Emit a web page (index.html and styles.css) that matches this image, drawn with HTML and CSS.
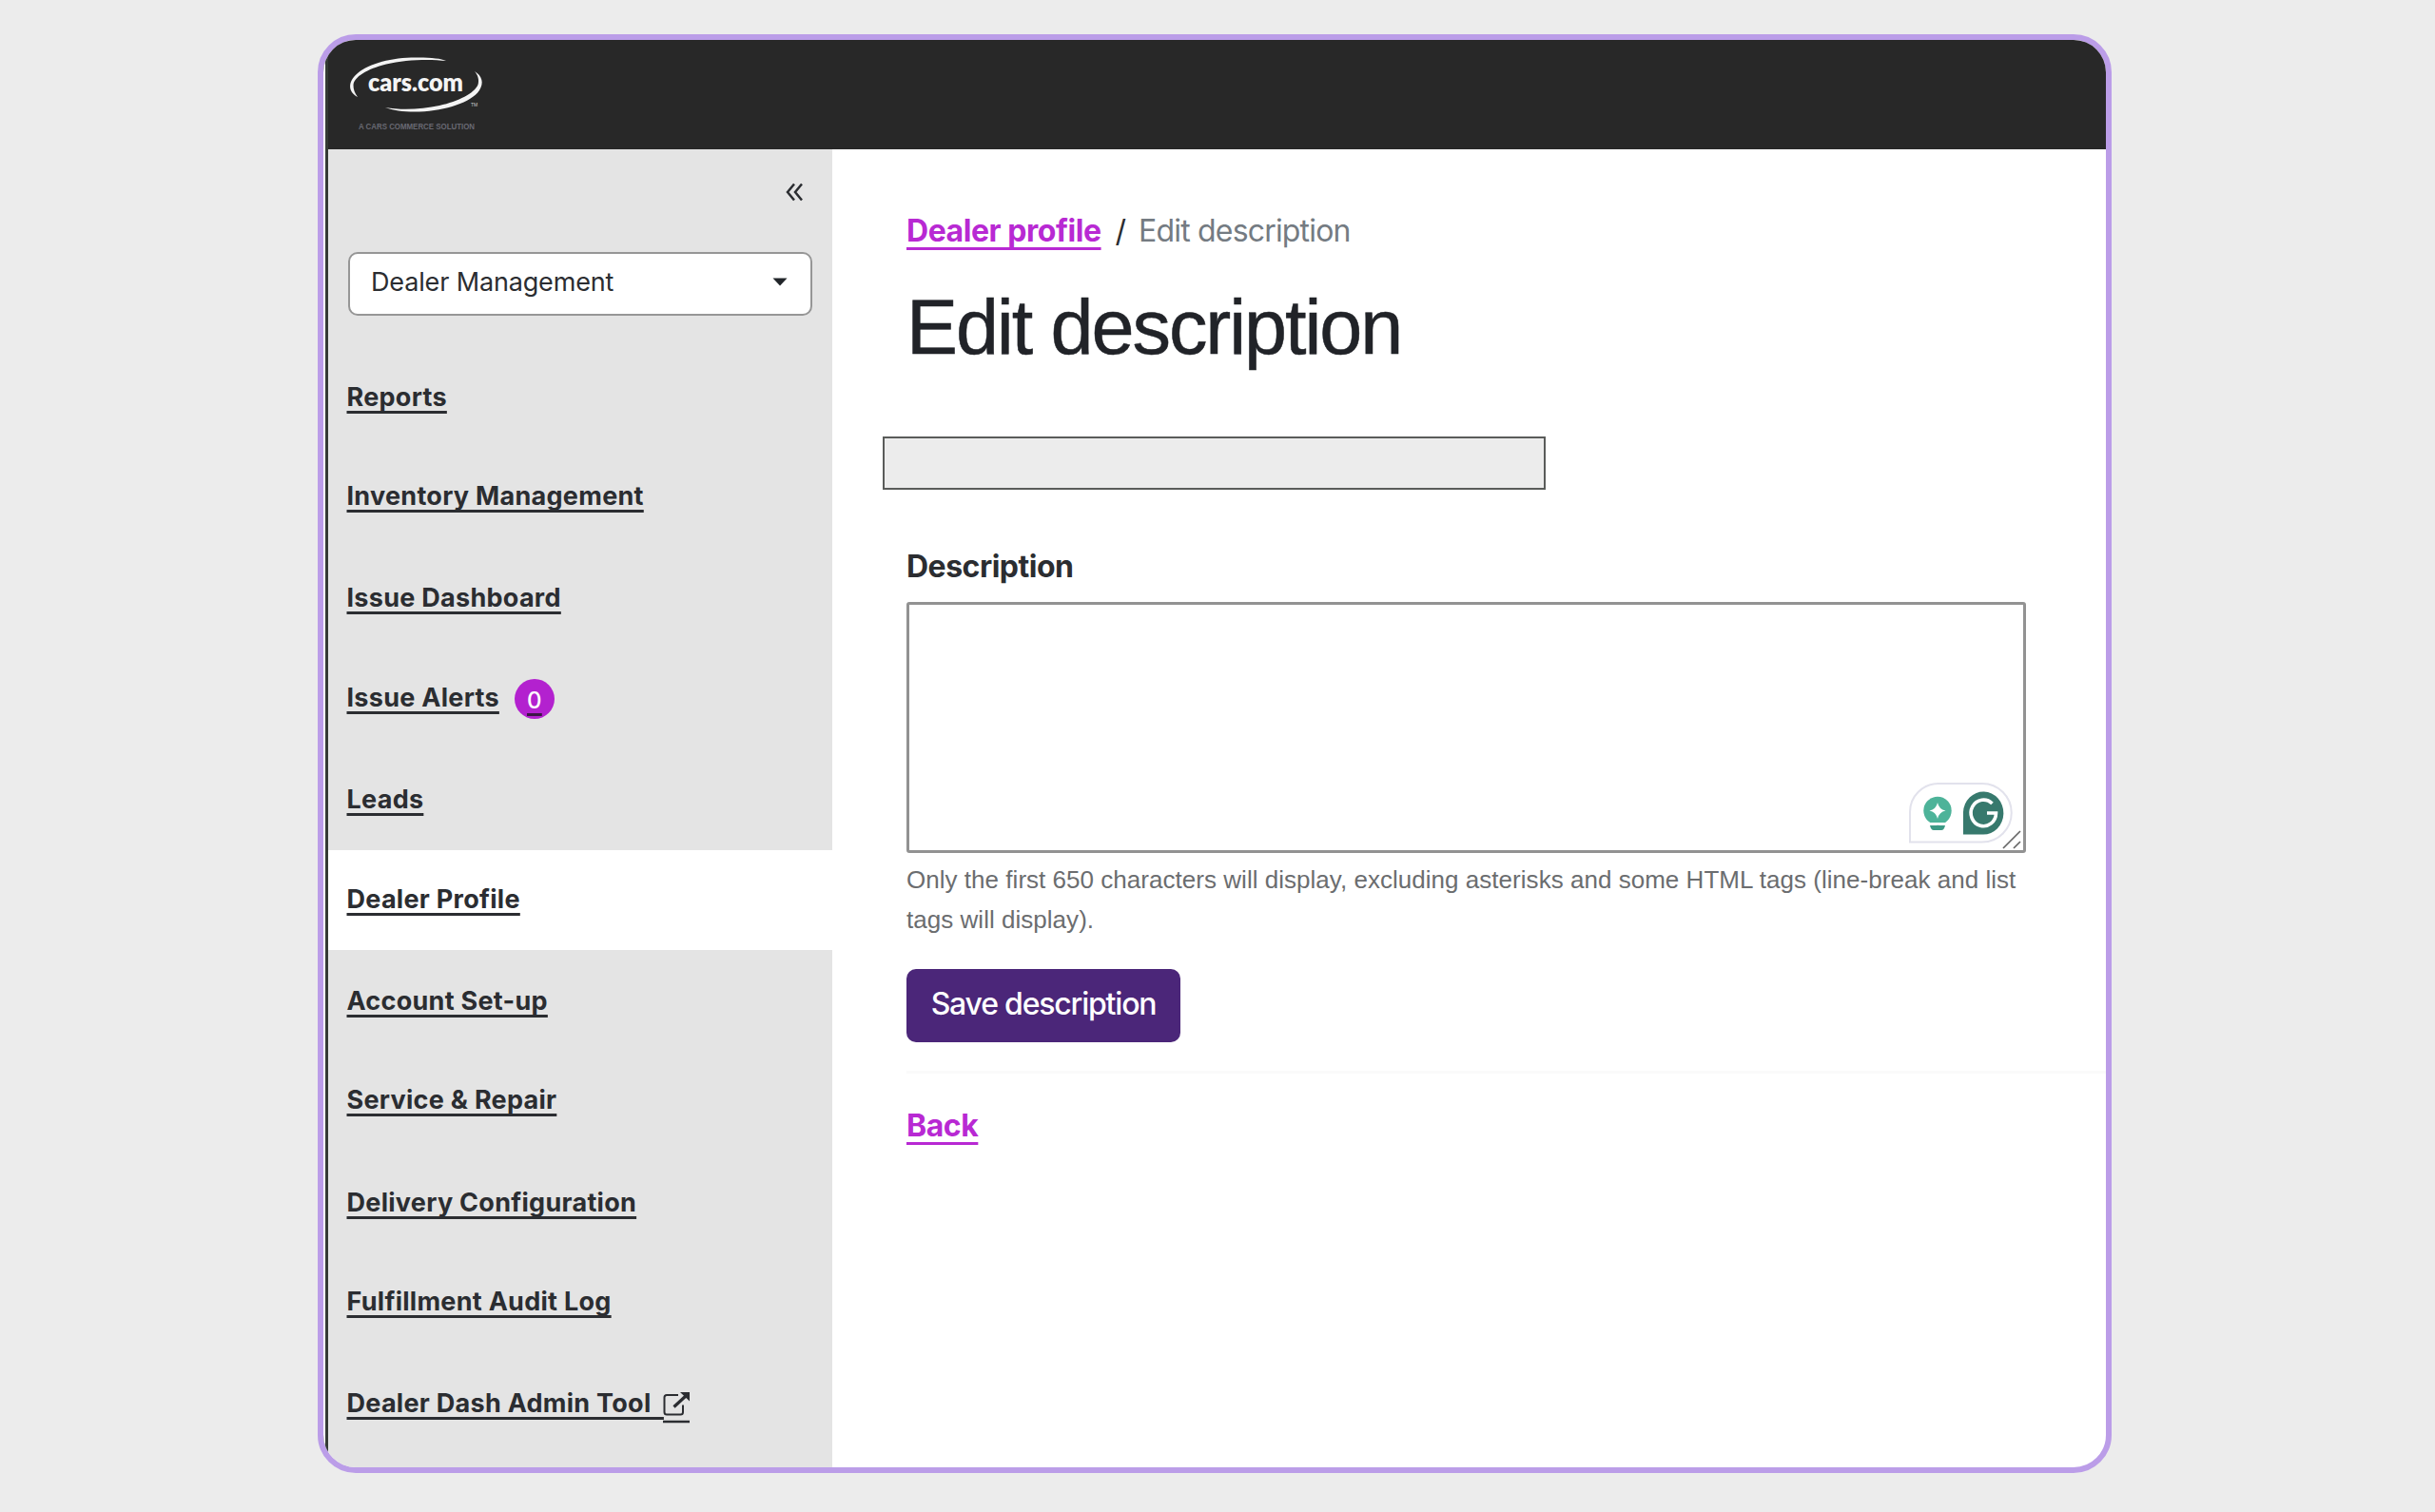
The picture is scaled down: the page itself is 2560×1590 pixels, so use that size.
FILE: index.html
```
<!DOCTYPE html>
<html lang="en">
<head>
<meta charset="utf-8">
<title>Edit description</title>
<link rel="stylesheet" href="styles.css">
</head>
<body>
<div class="window">
  <div class="edge"></div>
  <div class="app">
    <header class="topbar">
      <svg class="logo" width="150" height="90" viewBox="0 0 150 90" role="img" aria-label="cars.com">
        <path fill="#f4f4f4" d="M12 46C2 41 1 30 12 21C25 10 50 4 76 4.500C90 4.700 100 5.500 105 8C88 6 62 6.500 42 11.500C22 16.500 8 25 7.500 33.500C7.400 38 9 42 12 46Z"/>
        <path fill="#f4f4f4" d="M135 19C143 24 145 31 140 39C131 52 105 60 77 61.500C63 62 50 60.500 41 57C58 60 80 59 98 55C118 50.500 135 42 138.500 33C140 28 138.500 23 135 19Z"/>
        <text class="logo-name" x="23" y="39.500" textLength="100" lengthAdjust="spacingAndGlyphs">cars.com</text>
        <text class="logo-tm" x="131" y="56">TM</text>
        <text class="logo-tag" x="13" y="80" textLength="122" lengthAdjust="spacingAndGlyphs">A CARS COMMERCE SOLUTION</text>
      </svg>
    </header>
    <div class="columns">
      <aside class="sidebar">
        <div class="collapse">
          <svg width="20" height="20" viewBox="0 0 20 20" fill="none" stroke="#2b2d31" stroke-width="2.500"><path d="M10 1.500L3 10L10 18.500M18 1.500L11 10L18 18.500"/></svg>
        </div>
        <div class="select"><span>Dealer Management</span>
          <svg width="16" height="9" viewBox="0 0 16 9"><path d="M.5.5H15.500L8 8.500Z" fill="#212529"/></svg>
        </div>
        <nav class="nav">
          <div class="item"><a>Reports</a></div>
          <div class="item"><a>Inventory Management</a></div>
          <div class="item"><a>Issue Dashboard</a></div>
          <div class="item"><a>Issue Alerts</a><span class="badge">0</span></div>
          <div class="item"><a>Leads</a></div>
          <div class="item active"><a>Dealer Profile</a></div>
          <div class="item"><a>Account Set-up</a></div>
          <div class="item"><a>Service &amp; Repair</a></div>
          <div class="item"><a>Delivery Configuration</a></div>
          <div class="item"><a>Fulfillment Audit Log</a></div>
          <div class="item"><a class="external">Dealer Dash Admin Tool&nbsp; </a>
            <svg class="ext-icon" width="29" height="34" viewBox="0 0 29 34" fill="none" stroke="#2b2d31"><path stroke-width="2" d="M16 4H4Q1.500 4 1.500 6.500V22Q1.500 24.500 4 24.500H18.500Q21 24.500 21 22V14.500"/><path stroke-width="3.200" d="M11.500 16.500L24 5"/><path d="M18 1H28V10.500Z" fill="#2b2d31" stroke="none"/><path stroke-width="2.500" d="M0 32H28"/></svg>
          </div>
        </nav>
      </aside>
      <main class="main">
        <div class="breadcrumb"><a class="link">Dealer profile</a><span class="slash">/</span><span class="current">Edit description</span></div>
        <h1>Edit description</h1>
        <div class="dealer-name"></div>
        <div class="label">Description</div>
        <div class="textarea">
          <svg class="assistant" width="109" height="64" viewBox="0 0 109 64">
            <path d="M1 62.500V31A30 30 0 0 1 31 1H77A30.700 30.700 0 0 1 77 62.500Z" fill="#fff" stroke="#e2e2ec" stroke-width="2"/>
            <circle cx="30" cy="29.500" r="14.700" fill="#4db399"/>
            <path d="M30 21Q31.500 28 38.500 29.500Q31.500 31 30 38Q28.500 31 21.500 29.500Q28.500 28 30 21Z" fill="#fff"/>
            <path d="M21 43H39" stroke="#fff" stroke-width="2"/>
            <path d="M22 45H38Q37 50 34 50H26Q23 50 22 45Z" fill="#3c9a85"/>
            <path d="M57 54.500V31A21.200 22.500 0 1 1 78 54.500Z" fill="#37796d"/>
            <path d="M87.500 22A13.200 13.800 0 1 0 91.500 32H82" fill="none" stroke="#fff" stroke-width="3.600"/>
          </svg>
          <svg class="grip" width="20" height="20" viewBox="0 0 20 20" stroke="#666" stroke-width="1.700"><path d="M1 19L19 1M12 19L19 12"/></svg>
        </div>
        <p class="help">Only the first 650 characters will display, excluding asterisks and some HTML tags (line-break and list tags will display).</p>
        <button class="save">Save description</button>
        <div class="rule"></div>
        <a class="link back">Back</a>
      </main>
    </div>
  </div>
</div>
</body>
</html>
```
FILE: styles.css
```
* { box-sizing: border-box; }
body {
  margin: 0;
  height: 1590px;
  padding: 36px 0 0 334px;
  background: #ececec;
  color: #2b2d31;
  font-family: Inter, "Liberation Sans", sans-serif;
  overflow: hidden;
}
.window {
  display: flex;
  width: 1886px;
  height: 1513px;
  border: 6px solid #bb9de8;
  border-radius: 40px;
  background: #fff;
  overflow: hidden;
}
.edge { width: 5px; border-left: 2px solid #fff; background: #343a34; }
.app { flex: 1; display: flex; flex-direction: column; }
.topbar { height: 115px; padding: 14px 0 0 19px; background: #282828; }
.logo { display: block; }
.logo-name { font: 800 27px Lato, sans-serif; fill: #f4f4f4; }
.logo-tm { font: 5px "Liberation Sans", sans-serif; fill: #ccc; }
.logo-tag { font: 700 9px "Liberation Sans", sans-serif; fill: #686973; }
.columns { flex: 1; display: flex; }
.sidebar { width: 530px; background: #e4e4e4; }
.collapse { display: flex; justify-content: flex-end; padding: 35px 30px 0 0; height: 108px; }
.select {
  display: flex;
  align-items: center;
  justify-content: space-between;
  margin: 0 21px 0 21px;
  height: 67px;
  padding: 0 24px 4px 22px;
  border: 2px solid #969696;
  border-radius: 10px;
  background: #fff;
  font-size: 27px;
  letter-spacing: -.15px;
}
.nav { padding-top: 34.500px; }
.item {
  display: flex;
  align-items: center;
  height: 104.600px;
  padding: 0 0 3px 19.500px;
  font-size: 27px;
  font-weight: 700;
  letter-spacing: .28px;
}
.item:nth-child(even) { margin-bottom: 2.500px; }
.item a {
  white-space: pre;
  text-decoration: underline;
  text-decoration-thickness: 2.500px;
  text-underline-offset: 5px;
  text-decoration-skip-ink: none;
}
.active { background: #fff; }
.badge {
  display: flex;
  align-items: center;
  justify-content: center;
  width: 42px;
  height: 42px;
  margin: 3px 0 0 16px;
  padding-top: 3px;
  border-radius: 50%;
  background: #b321cf;
  color: #fff;
  font-size: 24px;
  font-weight: 500;
  text-decoration: underline 3px #3b1645;
  text-underline-offset: 5px;
}
.ext-icon { margin: 8px 0 0 -1px; }
.main { flex: 1; display: flex; flex-direction: column; align-items: flex-start; padding: 66px 0 0 78px; }
.breadcrumb { display: flex; font-size: 32px; line-height: 40px; }
.link {
  color: #b829d3;
  font-weight: 700;
  letter-spacing: -.450px;
  text-decoration: underline 3px;
  text-underline-offset: 6px;
  text-decoration-skip-ink: none;
}
.slash { margin: 0 13px 0 15px; }
.current { color: #747b82; letter-spacing: -.82px; }
h1 {
  margin: 33px 0 0;
  font: 400 81px/96px "Liberation Sans", sans-serif;
  letter-spacing: -2.100px;
  color: #212328;
  -webkit-text-stroke: .5px #212328;
}
.dealer-name { width: 697px; height: 56px; margin: 67px 0 0 -25px; border: 2px solid #5a5c5a; background: #ececec; }
.label { margin-top: 61px; font-size: 32px; line-height: 40px; font-weight: 700; letter-spacing: -.5px; }
.textarea {
  position: relative;
  width: 1177px;
  height: 264px;
  margin-top: 17px;
  border: 3px solid #929292;
  border-radius: 3px;
}
.assistant { position: absolute; right: 11px; bottom: 7px; }
.grip { position: absolute; right: 2px; bottom: 1px; }
.help { width: 1177px; margin: 7px 0 0; font: 26px/42px "Liberation Sans", sans-serif; letter-spacing: .03px; color: #6b6d6f; }
.save {
  width: 288px;
  height: 77px;
  margin-top: 31px;
  padding: 0 0 5px;
  border: 0;
  border-radius: 10px;
  background: #4b2679;
  color: #fff;
  font: 500 32px Inter, sans-serif;
  letter-spacing: -1.200px;
}
.rule { align-self: stretch; height: 3px; margin-top: 30px; background: #fafafa; }
.back { margin-top: 35px; font-size: 32px; line-height: 40px; }
```
